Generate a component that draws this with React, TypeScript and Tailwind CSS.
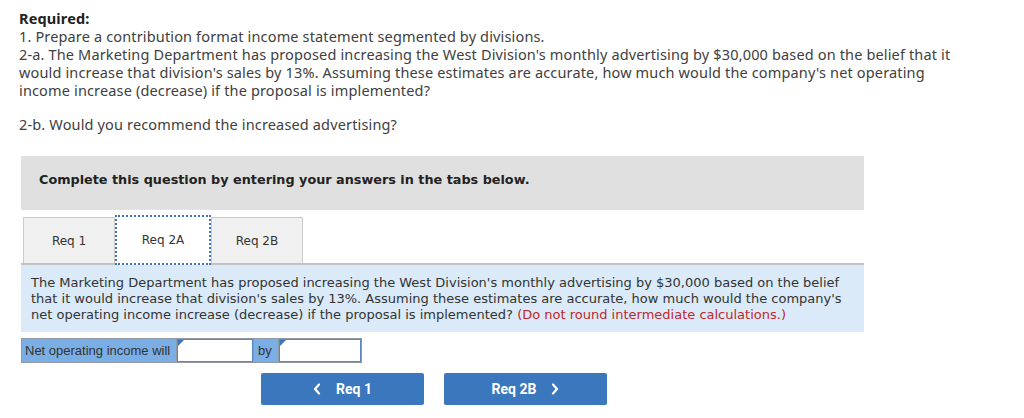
function Chevron({ dir }: { dir: "left" | "right" }) {
  return (
    <svg width="8" height="12" viewBox="0 0 8 12" className="shrink-0">
      {dir === "left" ? (
        <path d="M6 1.5 L2 6 L6 10.5" fill="none" stroke="white" strokeWidth="2.2" strokeLinecap="round" strokeLinejoin="round" />
      ) : (
        <path d="M2 1.5 L6 6 L2 10.5" fill="none" stroke="white" strokeWidth="2.2" strokeLinecap="round" strokeLinejoin="round" />
      )}
    </svg>
  );
}

function AnswerInput({ width }: { width: string }) {
  return (
    <div className={`relative h-full bg-white border border-[#5b86bf] ${width}`}>
      <div className="absolute left-0 top-0 w-0 h-0 border-t-[6px] border-t-[#3a77bc] border-r-[6px] border-r-transparent" />
    </div>
  );
}

export default function App() {
  return (
    <div className="w-[1024px] h-[418px] bg-white overflow-hidden">
      <div className="pl-[19px] pt-[9px] font-['Noto_Sans',sans-serif] text-[14.5px] leading-[18px] tracking-[0.15px] text-[#404040]">
        <div className="font-bold text-[#222]">Required:</div>
        <div>1. Prepare a contribution format income statement segmented by divisions.</div>
        <div>
          2-a. The Marketing Department has proposed increasing the West Division's monthly advertising by $30,000 based on the belief that it
          <br />
          would increase that division's sales by 13%. Assuming these estimates are accurate, how much would the company's net operating
          <br />
          income increase (decrease) if the proposal is implemented?
        </div>
        <div className="mt-[16px]">2-b. Would you recommend the increased advertising?</div>
      </div>

      <div className="mt-[23px] ml-[21px] w-[843px] h-[54px] bg-[#e0e0e0] pl-[18px] pt-[16px]">
        <div className="font-['DejaVu_Sans',sans-serif] font-bold text-[12.8px] leading-[16px] text-[#222]">
          Complete this question by entering your answers in the tabs below.
        </div>
      </div>

      <div className="mt-[5px] ml-[23px] h-[48px] flex items-end font-['DejaVu_Sans',sans-serif] text-[12px] text-[#333]">
        <div className="w-[92px] h-[46px] flex items-center justify-center bg-[#f0f0f0] border border-b-0 border-[#cbcbcb]">
          Req 1
        </div>
        <div className="relative z-10 -mb-[2px] w-[96px] h-[50px] flex items-center justify-center bg-white border-2 border-dotted border-[#3d74bd]">
          Req 2A
        </div>
        <div className="w-[92px] h-[46px] flex items-center justify-center bg-[#f0f0f0] border border-b-0 border-[#cbcbcb]">
          Req 2B
        </div>
      </div>

      <div className="ml-[21px] w-[843px] border-t-2 border-[#c2c2c2] bg-[#daeaf8] px-[10px] pt-[10px] pb-[9px] font-['DejaVu_Sans',sans-serif] text-[13px] leading-[16px] text-[#333]">
        The Marketing Department has proposed increasing the West Division's monthly advertising by $30,000 based on the belief
        <br />
        that it would increase that division's sales by 13%. Assuming these estimates are accurate, how much would the company's
        <br />
        net operating income increase (decrease) if the proposal is implemented?{" "}
        <span className="text-[#c1272d]">(Do not round intermediate calculations.)</span>
      </div>

      <div className="mt-[6px] ml-[21px] w-[341px] h-[25px] flex bg-[#7aaee4] border border-[#8f9aa6] font-['Liberation_Sans',sans-serif] text-[13px] text-[#333]">
        <div className="w-[155px] h-full flex items-center pl-[3px] border-r border-[#8f9aa6]">Net operating income will</div>
        <AnswerInput width="w-[76px]" />
        <div className="w-[26px] h-full flex items-center pl-[4px] border-x border-[#8f9aa6]">by</div>
        <AnswerInput width="flex-1" />
      </div>

      <div className="mt-[10px] ml-[261px] flex gap-[20px] font-['Roboto',sans-serif] font-bold text-[14px] text-white">
        <div className="w-[163px] h-[32px] rounded-[2px] bg-[#3a77bc] flex items-center justify-center gap-[15px]">
          <Chevron dir="left" />
          <span>Req 1</span>
        </div>
        <div className="w-[163px] h-[32px] rounded-[2px] bg-[#3a77bc] flex items-center justify-center gap-[15px]">
          <span>Req 2B</span>
          <Chevron dir="right" />
        </div>
      </div>
    </div>
  );
}
